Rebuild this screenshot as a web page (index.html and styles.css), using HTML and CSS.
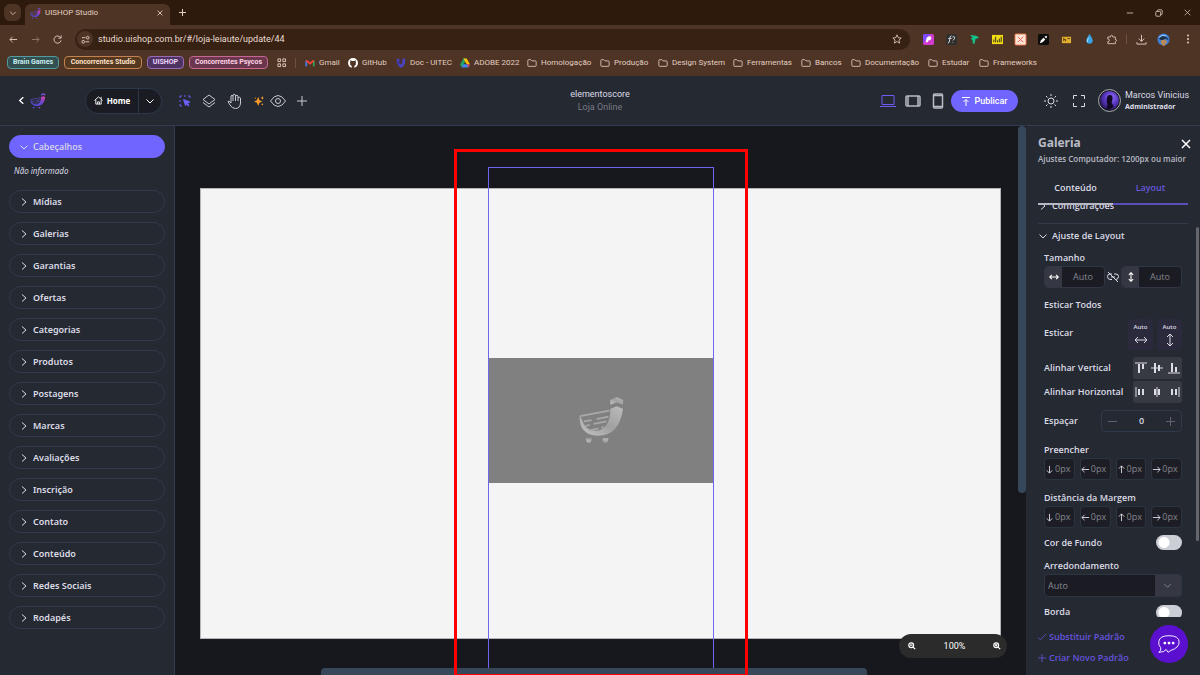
FILE: index.html
```
<!DOCTYPE html>
<html lang="pt-BR">
<head>
<meta charset="utf-8">
<title>UISHOP Studio</title>
<link rel="stylesheet" href="styles.css">
</head>
<body>
<svg class="defs" aria-hidden="true">
  <defs>
    <linearGradient id="birdGrad" x1="0" y1="1" x2="1" y2="0"><stop offset="0" stop-color="#4a4be0"/><stop offset=".55" stop-color="#6a48d0"/><stop offset="1" stop-color="#e8409a"/></linearGradient>
    <linearGradient id="greyGrad" x1="0" y1="1" x2="1" y2="0"><stop offset="0" stop-color="#c4c4c4"/><stop offset=".5" stop-color="#a0a0a0"/><stop offset="1" stop-color="#bcbcbc"/></linearGradient>
    <radialGradient id="face" cx=".6" cy=".35" r=".8"><stop offset="0" stop-color="#8d6cff"/><stop offset=".5" stop-color="#5533b8"/><stop offset="1" stop-color="#140b30"/></radialGradient>
  </defs>
  <symbol id="bird" viewBox="0 0 48 48">
    <path d="M1.500 19Q1 39 20 39.500 42 40 46 12L39.500 9.500 33 12Q33 30 22 34 8 37 3.500 22Z" stroke="none"/>
    <path d="M33 8V3L39.500 0 46 3V8L39.500 5.500Z" stroke="none"/>
    <path d="M2 19.500 32 14M6 25 14 23.500M19 22.500 31 20M8 29.500 12 28.500M16 27.500 29 25M12 34 21 32M24 31 26 30.500" fill="none" stroke-width="1.800"/>
    <path d="M8 42H14Q14 46.500 11 46.500T8 42ZM25 42H31Q31 46.500 28 46.500T25 42Z" stroke="none"/>
  </symbol>
  <symbol id="down" viewBox="0 0 10 10"><path d="M1.500 3.500 5 7 8.500 3.500"/></symbol>
  <symbol id="right" viewBox="0 0 10 10"><path d="M3 1.500 7 5 3 8.500"/></symbol>
  <symbol id="close" viewBox="0 0 10 10"><path d="M1 1 9 9M9 1 1 9"/></symbol>
  <symbol id="plus" viewBox="0 0 10 10"><path d="M5 0V10M0 5H10"/></symbol>
  <symbol id="folder" viewBox="0 0 12 10"><path d="M1 2Q1 1 2 1H4.500L6 2.500H10Q11 2.500 11 3.500V8Q11 9 10 9H2Q1 9 1 8Z"/></symbol>
  <symbol id="arrow" viewBox="0 0 10 10"><path d="M9 5H1M4 2 1 5 4 8"/></symbol>
  <symbol id="both" viewBox="0 0 14 10"><path d="M1 5H13M4 2 1 5 4 8M10 2 13 5 10 8"/></symbol>
  <symbol id="magnify" viewBox="0 0 10 10"><circle cx="4" cy="4" r="3"/><path d="M6 6 9 9M2.500 4H5.500"/></symbol>
</svg>

<div class="browser">
  <div class="tabstrip">
    <button class="tab-search" aria-label="Pesquisar guias"><svg class="i8"><use href="#down"/></svg></button>
    <div class="tab">
      <svg class="i11 bird"><use href="#bird"/></svg>
      <span class="tab-name">UISHOP Studio</span>
      <button aria-label="Fechar guia"><svg class="i6 heavy"><use href="#close"/></svg></button>
    </div>
    <button class="new-tab" aria-label="Nova guia"><svg class="i7 heavy"><use href="#plus"/></svg></button>
    <div class="window-buttons">
      <button aria-label="Minimizar"><svg class="i8" viewBox="0 0 10 10"><path d="M1 5H9"/></svg></button>
      <button aria-label="Restaurar"><svg class="i8" viewBox="0 0 10 10"><rect x="1" y="3" width="6" height="6" rx="1"/><path d="M3 3V2Q3 1 4 1H8Q9 1 9 2V6Q9 7 8 7H7"/></svg></button>
      <button aria-label="Fechar"><svg class="i7"><use href="#close"/></svg></button>
    </div>
  </div>
  <div class="toolbar">
    <button aria-label="Voltar"><svg class="i9"><use href="#arrow"/></svg></button>
    <button class="faded" aria-label="Avançar"><svg class="i9 flip"><use href="#arrow"/></svg></button>
    <button aria-label="Recarregar"><svg class="i9" viewBox="0 0 10 10"><path d="M8.500 3A4 4 0 1 0 9 6M9 .5V3.500H6"/></svg></button>
    <label class="address">
      <span class="site"><svg class="i9" viewBox="0 0 10 10"><path d="M1 3H5M5 7.500H9"/><circle cx="7.500" cy="3" r="1.500"/><circle cx="2.500" cy="7.500" r="1.500"/></svg></span>
      <input type="text" aria-label="Endereço" value="studio.uishop.com.br/#/loja-leiaute/update/44">
      <svg class="i10" viewBox="0 0 12 12"><path d="M6 1 7.500 4.500 11 4.800 8.300 7.200 9.200 11 6 9 2.800 11 3.700 7.200 1 4.800 4.500 4.500Z"/></svg>
    </label>
    <div class="extensions">
      <svg viewBox="0 0 12 12"><rect width="12" height="12" rx="2" fill="#d33bd0" stroke="none"/><path d="M0 2Q0 0 2 0H8L0 10Z" fill="#7a4bff" stroke="none"/><path d="M3 9 4 4Q8 1 9 4 9 7 6 7L5 9Z" fill="#fff" stroke="none"/></svg>
      <svg viewBox="0 0 12 12"><rect width="12" height="12" rx="2" fill="#30302f" stroke="none"/><path d="M2 10Q4 10 4 6T6 2M2.500 5H6M7 3.500Q9 2 9.500 3.500T7.500 7M7.300 9V9.500" stroke="#e8e8e8"/></svg>
      <svg viewBox="0 0 12 12"><path d="M1 1 8 2 11 4 7 5.500 6 11 4 10V7L2 5 4 4Z" fill="#12c48b" stroke="none"/></svg>
      <svg viewBox="0 0 12 12"><rect y="1" width="12" height="10" fill="#f3dd12" stroke="none"/><path d="M2 9V6M4 9V3M6 9V7M8 9V5M10 9V3" stroke="#222"/></svg>
      <svg viewBox="0 0 12 12"><rect width="12" height="12" rx="1" fill="#fbe6d5" stroke="#f2744f"/><path d="M3 3 6 6 3 9M9 3 6 6 9 9" stroke="#ef4c4c"/></svg>
      <svg viewBox="0 0 12 12"><rect width="12" height="12" rx="2" fill="#0c0c0c" stroke="none"/><path d="M2 10 3 7 6 4 8 6 5 9ZM7 3 9 2 10 3 9 5Z" fill="#fff" stroke="none"/></svg>
      <svg viewBox="0 0 12 12"><rect x="1" y="3" width="10" height="7" fill="#e0b02e" stroke="none"/><path d="M3 8V4M3 6H5V8M7 5H10" stroke="#5c3c0c"/></svg>
      <svg viewBox="0 0 12 12"><path d="M6 0Q10 6 9.500 8A3.600 3.600 0 0 1 2.500 8Q2 6 6 0Z" fill="#37a4e6" stroke="none"/><path d="M5 4Q3 7 4 9" stroke="#b4e4ff"/></svg>
      <svg class="beige" viewBox="0 0 12 12"><path d="M1 3H4Q4 1 5.500 1T7 3H10V6Q11.500 6 11.500 7T10 8.500V11H1V8.500Q3 8.500 3 7T1 5.500Z"/></svg>
    </div>
    <span class="rule"></span>
    <button class="downloads" aria-label="Downloads"><svg class="i11" viewBox="0 0 12 12"><path d="M6 1V8M3 5 6 8 9 5M1 9V11H11V9"/></svg></button>
    <button aria-label="Perfil"><svg class="i13" viewBox="0 0 14 14"><circle cx="7" cy="7" r="6.500" fill="#3c7fdc" stroke="none"/><path d="M2 6Q6 1 11 5L13 8 9 6 6 9Z" fill="#1d3149" stroke="none"/><path d="M4 8 8 7 11 9 8 14Q4 13 4 8Z" fill="#b98a55" stroke="none"/><path d="M2 5Q5 1 10 3" stroke="#a8d2ff"/></svg></button>
    <button aria-label="Menu"><svg class="i10 dots" viewBox="0 0 10 10"><circle cx="5" cy="1.500" r="1"/><circle cx="5" cy="5" r="1"/><circle cx="5" cy="8.500" r="1"/></svg></button>
  </div>
  <div class="bookmarks">
    <div class="groups">
      <button class="group teal">Brain Games</button>
      <button class="group orange">Concorrentes Studio</button>
      <button class="group violet">UISHOP</button>
      <button class="group pink">Concorrentes Psycos</button>
    </div>
    <svg class="i9" viewBox="0 0 10 10"><path d="M1 1H4V4H1ZM6.500 1H9.500V4H6.500ZM1 6.500H4V9.500H1ZM6.500 6.500H9.500V9.500H6.500Z"/></svg>
    <span class="rule"></span>
    <nav class="links">
      <a href="#"><svg viewBox="0 0 12 10"><path d="M1.500 9V2" stroke="#4285f4" stroke-width="2"/><path d="M10.500 9V2" stroke="#34a853" stroke-width="2"/><path d="M1.500 2 6 5.500 10.500 2" stroke="#ea4335" stroke-width="2.400"/></svg>Gmail</a>
      <a href="#"><svg viewBox="0 0 12 12"><circle cx="6" cy="6" r="6" fill="#fff" stroke="none"/><path d="M4.500 12V9.500Q2 8.500 2.500 5.500L3 2.500 4.500 3.500H7.500L9 2.500 9.500 5.500Q10 8.500 7.500 9.500V12Z" fill="#4e3425" stroke="none"/></svg>GitHub</a>
      <a href="#"><svg viewBox="0 0 12 12"><path d="M1 1H4V6L7 8 8 1H11Q12 9 6 12 0 9 1 1Z" fill="#4b43c8" stroke="none"/><path d="M5 1V5M2 3 4 8" stroke="#2d2680"/></svg>Doc - UITEC</a>
      <a href="#"><svg viewBox="0 0 12 11"><path d="M4 0H8L6 4 2.500 11 0 7.500Z" fill="#1fa463" stroke="none"/><path d="M4 0H8L12 7H8Z" fill="#fbbc04" stroke="none"/><path d="M2 11 4 7H12L10 11Z" fill="#4285f4" stroke="none"/><path d="M8.500 7H12L10 11Z" fill="#ea4335" stroke="none"/></svg>ADOBE 2022</a>
      <a href="#"><svg><use href="#folder"/></svg>Homologação</a>
      <a href="#"><svg><use href="#folder"/></svg>Produção</a>
      <a href="#"><svg><use href="#folder"/></svg>Design System</a>
      <a href="#"><svg><use href="#folder"/></svg>Ferramentas</a>
      <a href="#"><svg><use href="#folder"/></svg>Bancos</a>
      <a href="#"><svg><use href="#folder"/></svg>Documentação</a>
      <a href="#"><svg><use href="#folder"/></svg>Estudar</a>
      <a href="#"><svg><use href="#folder"/></svg>Frameworks</a>
    </nav>
  </div>
</div>

<header class="header">
  <div class="header-left">
    <button class="back" aria-label="Voltar"><svg class="i9 flip heavy"><use href="#right"/></svg></button>
    <svg class="i16 bird"><use href="#bird"/></svg>
    <div class="home">
      <button class="home-main"><svg class="i9" viewBox="0 0 10 10"><path d="M.5 5 5 1 9.500 5M2 4V9H8V4M4 9V6.500H6V9M8 1V3"/></svg>Home</button>
      <button class="home-more" aria-label="Mais páginas"><svg class="i10"><use href="#down"/></svg></button>
    </div>
    <div class="tools">
      <button aria-label="Selecionar"><svg class="i12 accent" viewBox="0 0 12 12"><path d="M1 3V1H3M5 1H7M9 1H11V3M1 5V7M1 9V11H3" /><path d="M4.500 4.500 11 7 8.500 8 10 10.500 9 11 7.500 9 6.500 10.500Z" fill="#7065f8"/></svg></button>
      <button aria-label="Camadas"><svg class="i14" viewBox="0 0 14 14"><path d="M7 1 13 5.500 7 10 1 5.500ZM1 8.500 7 13 13 8.500"/></svg></button>
      <button aria-label="Mover"><svg class="i16" viewBox="0 0 16 16"><path d="M4 10V3Q5 1.500 6 3V8M6 3V2Q7 .5 8.500 2V8M8.500 3Q10 1.500 11 3V8M11 5Q13 3.500 13.500 5V10Q13 15.500 8.500 15.500 5 15.500 3 12L1 8.500Q2 7 4 10"/></svg></button>
      <button aria-label="Inteligência artificial"><svg class="i10 spark" viewBox="0 0 12 12"><path d="M5 1 6.500 5 10 6.500 6.500 8 5 12 3.500 8 0 6.500 3.500 5ZM10 0 10.700 1.700 12 2.300 10.700 3 10 4.500 9.300 3 8 2.300 9.300 1.700Z"/><circle cx="10" cy="10" r="1"/><circle cx="1.500" cy="2.500" r=".8"/></svg></button>
      <button aria-label="Visualizar"><svg class="i16" viewBox="0 0 16 16"><path d="M.5 8Q4 2.500 8 2.500T15.500 8Q12 13.500 8 13.500T.5 8Z"/><circle cx="8" cy="8" r="2.500"/></svg></button>
      <button aria-label="Adicionar"><svg class="i10"><use href="#plus"/></svg></button>
    </div>
  </div>
  <div class="page-title"><span>elementoscore</span><small>Loja Online</small></div>
  <div class="header-right">
    <div class="devices">
      <button aria-label="Computador"><svg class="i16 accent" viewBox="0 0 16 16"><path d="M2 2.500H14V11.500H2ZM0 13.500H16"/></svg></button>
      <button aria-label="Tablet"><svg class="i16 thick" viewBox="0 0 16 16"><rect x="1" y="3" width="14" height="10" rx="1"/><path d="M3 3V13M13 3V13"/></svg></button>
      <button aria-label="Celular"><svg class="i16 thick" viewBox="0 0 16 16"><rect x="3.500" y="1" width="9" height="14" rx="1"/><path d="M4 2.500H12M4 13.500H12"/></svg></button>
    </div>
    <button class="publish"><svg class="i10" viewBox="0 0 10 10"><path d="M1 1.500H9M5 10V3.500M2.500 6 5 3.500 7.500 6"/></svg>Publicar</button>
    <button class="sun" aria-label="Tema"><svg class="i14" viewBox="0 0 14 14"><circle cx="7" cy="7" r="3"/><path d="M7 0V2M7 12V14M0 7H2M12 7H14M2 2 3.500 3.500M10.500 10.500 12 12M12 2 10.500 3.500M3.500 10.500 2 12"/></svg></button>
    <button class="full" aria-label="Tela cheia"><svg class="i12" viewBox="0 0 12 12"><path d="M.5 4V.5H4M8 .5H11.500V4M11.500 8V11.500H8M4 11.500H.5V8"/></svg></button>
    <svg class="avatar" viewBox="0 0 22 22"><circle cx="11" cy="11" r="10.500" fill="#17181d" stroke="#c9c9d3" stroke-width=".8"/><circle cx="11" cy="11" r="9" fill="url(#face)" stroke="none"/><path d="M8 20 9 15Q7 9 10 6 14 5 14 9L13 13 15 17Q12 20 8 20Z" fill="#110923" stroke="none"/></svg>
    <div class="user"><span>Marcos Vinicius</span><b>Administrador</b></div>
  </div>
</header>

<main class="studio">
  <aside class="sidebar">
    <button class="category open"><svg class="i10"><use href="#down"/></svg>Cabeçalhos</button>
    <em class="empty">Não informado</em>
    <button class="category"><svg class="i10"><use href="#right"/></svg>Mídias</button>
    <button class="category"><svg class="i10"><use href="#right"/></svg>Galerias</button>
    <button class="category"><svg class="i10"><use href="#right"/></svg>Garantias</button>
    <button class="category"><svg class="i10"><use href="#right"/></svg>Ofertas</button>
    <button class="category"><svg class="i10"><use href="#right"/></svg>Categorias</button>
    <button class="category"><svg class="i10"><use href="#right"/></svg>Produtos</button>
    <button class="category"><svg class="i10"><use href="#right"/></svg>Postagens</button>
    <button class="category"><svg class="i10"><use href="#right"/></svg>Marcas</button>
    <button class="category"><svg class="i10"><use href="#right"/></svg>Avaliações</button>
    <button class="category"><svg class="i10"><use href="#right"/></svg>Inscrição</button>
    <button class="category"><svg class="i10"><use href="#right"/></svg>Contato</button>
    <button class="category"><svg class="i10"><use href="#right"/></svg>Conteúdo</button>
    <button class="category"><svg class="i10"><use href="#right"/></svg>Redes Sociais</button>
    <button class="category"><svg class="i10"><use href="#right"/></svg>Rodapés</button>
  </aside>

  <section class="canvas" aria-label="Área de edição">
    <div class="artboard"></div>
    <div class="picture"><svg class="placeholder"><use href="#bird"/></svg></div>
    <div class="bar-bottom"></div>
    <div class="selection"></div>
    <div class="bar-side"></div>
    <div class="highlight"></div>
    <div class="zoom">
      <button aria-label="Diminuir"><svg class="i8 heavy"><use href="#magnify"/></svg></button>
      <span>100%</span>
      <button aria-label="Aumentar"><svg class="i8 heavy" viewBox="0 0 10 10"><use href="#magnify" width="10" height="10"/><path d="M4 2.500V5.500"/></svg></button>
    </div>
  </section>

  <aside class="panel">
    <div class="panel-head">
      <div><h2>Galeria</h2><p>Ajustes Computador: 1200px ou maior</p></div>
      <button aria-label="Fechar painel"><svg class="i10 heavy"><use href="#close"/></svg></button>
    </div>
    <div class="tabs"><button>Conteúdo</button><button class="active">Layout</button></div>
    <div class="scroll">
      <button class="section clipped"><svg class="i10"><use href="#right"/></svg>Configurações</button>
      <button class="section"><svg class="i10"><use href="#down"/></svg>Ajuste de Layout</button>
      <div class="fields">
        <label class="caption" for="width">Tamanho</label>
        <div class="size">
          <div class="sized"><span><svg class="i10 heavy"><use href="#both"/></svg></span><input id="width" type="text" placeholder="Auto"></div>
          <button aria-label="Desvincular"><svg class="i12" viewBox="0 0 12 12"><path d="M1 1 11 11M5 3H3Q.5 3 .5 5.500T3 8.500H5M7 3H9Q11.500 3 11.500 5.500T9 8.500M4 6H8"/></svg></button>
          <div class="sized"><span><svg class="i10 heavy turn"><use href="#both"/></svg></span><input type="text" aria-label="Altura" placeholder="Auto"></div>
        </div>
        <div class="stretch-all">Esticar Todos</div>
        <div class="row stretch"><span>Esticar</span>
          <div class="stretch-buttons"><button>Auto<svg class="i14"><use href="#both"/></svg></button><button>Auto<svg class="i14 turn"><use href="#both"/></svg></button></div>
        </div>
        <div class="row"><span>Alinhar Vertical</span>
          <div class="align">
            <button aria-label="Topo"><svg class="i12" viewBox="0 0 12 12"><path d="M0 1H12"/><path class="w" d="M4 2V11M8 2V7"/></svg></button>
            <button aria-label="Meio"><svg class="i12" viewBox="0 0 12 12"><path d="M0 6H12"/><path class="w" d="M4 1V11M8 3V9"/></svg></button>
            <button aria-label="Base"><svg class="i12" viewBox="0 0 12 12"><path d="M0 11H12"/><path class="w" d="M4 1V10M8 5V10"/></svg></button>
          </div>
        </div>
        <div class="row"><span>Alinhar Horizontal</span>
          <div class="align">
            <button aria-label="Esquerda"><svg class="i12" viewBox="0 0 12 12"><path d="M1 1V11"/><path class="w" d="M4 3V9M8 3V9"/></svg></button>
            <button aria-label="Centro"><svg class="i12" viewBox="0 0 12 12"><path d="M6 1V11"/><path class="w" d="M4 3V9M8 3V9"/></svg></button>
            <button aria-label="Direita"><svg class="i12" viewBox="0 0 12 12"><path d="M11 1V11"/><path class="w" d="M4 3V9M8 3V9"/></svg></button>
          </div>
        </div>
        <div class="row gap-row"><label for="gap">Espaçar</label>
          <div class="stepper"><button aria-label="Menos"><svg class="i9" viewBox="0 0 10 10"><path d="M0 5H10"/></svg></button><input id="gap" type="text" value="0"><button aria-label="Mais"><svg class="i9"><use href="#plus"/></svg></button></div>
        </div>
        <span class="caption spaced">Preencher</span>
        <div class="sides">
          <label><svg class="i9 ccw"><use href="#arrow"/></svg><input type="text" aria-label="Preencher abaixo" placeholder="0px"></label>
          <label><svg class="i9"><use href="#arrow"/></svg><input type="text" aria-label="Preencher à esquerda" placeholder="0px"></label>
          <label><svg class="i9 turn"><use href="#arrow"/></svg><input type="text" aria-label="Preencher acima" placeholder="0px"></label>
          <label><svg class="i9 flip"><use href="#arrow"/></svg><input type="text" aria-label="Preencher à direita" placeholder="0px"></label>
        </div>
        <span class="caption spaced">Distância da Margem</span>
        <div class="sides">
          <label><svg class="i9 ccw"><use href="#arrow"/></svg><input type="text" aria-label="Margem abaixo" placeholder="0px"></label>
          <label><svg class="i9"><use href="#arrow"/></svg><input type="text" aria-label="Margem à esquerda" placeholder="0px"></label>
          <label><svg class="i9 turn"><use href="#arrow"/></svg><input type="text" aria-label="Margem acima" placeholder="0px"></label>
          <label><svg class="i9 flip"><use href="#arrow"/></svg><input type="text" aria-label="Margem à direita" placeholder="0px"></label>
        </div>
        <div class="row switch-row"><label for="bg">Cor de Fundo</label><input class="switch" id="bg" type="checkbox"></div>
        <label class="caption" for="round">Arredondamento</label>
        <div class="select"><select id="round"><option>Auto</option></select><svg class="i9"><use href="#down"/></svg></div>
        <div class="row switch-row last"><label for="border">Borda</label><input class="switch" id="border" type="checkbox"></div>
      </div>
    </div>
    <div class="panel-foot">
      <button><svg class="i8" viewBox="0 0 10 10"><path d="M0 5.500 3 8.500 10 1.500"/></svg>Substituir Padrão</button>
      <button><svg class="i8"><use href="#plus"/></svg>Criar Novo Padrão</button>
    </div>
    <div class="panel-bar"></div>
    <button class="chat" aria-label="Conversar"><svg viewBox="0 0 26 22"><path d="M4 15Q1 12 2 8 3 2 13 2 24 2 24 9 24 15 15 18L12 20 10 17Q8 20 2 20 5 18 4 15Z"/><circle cx="8.500" cy="10" r="1.500"/><circle cx="13" cy="10" r="1.500"/><circle cx="17.500" cy="10" r="1.500"/></svg></button>
  </aside>
</main>
</body>
</html>
```
FILE: styles.css
```
* { box-sizing: border-box; }
body {
  margin: 0;
  height: 100vh;
  overflow: hidden;
  display: flex;
  flex-direction: column;
  background: #17181d;
  color: #dcdce6;
  font: 9px/12px "Open Sans", "Noto Sans", sans-serif;
}
button, input, select {
  margin: 0;
  padding: 0;
  border: 0;
  background: none;
  color: inherit;
  font: inherit;
  min-width: 0;
}
button { display: flex; align-items: center; justify-content: center; flex: none; }
svg { flex: none; fill: none; stroke: currentColor; stroke-width: 1; overflow: visible; }
.defs { position: absolute; width: 0; height: 0; }
.i6 { width: 6px; height: 6px; }
.i7 { width: 7px; height: 7px; }
.i8 { width: 8px; height: 8px; }
.i9 { width: 9px; height: 9px; }
.i10 { width: 10px; height: 10px; }
.i11 { width: 11px; height: 11px; }
.i12 { width: 12px; height: 12px; }
.i13 { width: 13px; height: 13px; }
.i14 { width: 14px; height: 14px; }
.i16 { width: 16px; height: 16px; }
.heavy { stroke-width: 1.5; }
.bird { fill: url(#birdGrad); stroke: #6450dc; }
.accent { color: #6a5cf5; }
.flip { transform: rotate(180deg); }
.turn { transform: rotate(90deg); }
.ccw { transform: rotate(-90deg); }
.rule { width: 1px; height: 10px; background: #6d5040; }

/* Browser window */
.browser { flex: none; color: #e3cfc2; background: #4e3425; font-family: "Noto Sans", "Open Sans", sans-serif; }
.tabstrip { display: flex; height: 25px; padding: 4px 9px 0 4px; background: #2d1a0d; }
.tab-search { width: 17px; height: 17px; border-radius: 6px; background: #4e3425; }
.tab { display: flex; align-items: center; gap: 4px; width: 145px; margin-left: 4px; padding: 0 7px 3px 5px; border-radius: 6px 6px 0 0; background: #4e3425; }
.tab-name { flex: 1; font: 8px/12px Roboto, sans-serif; }
.new-tab { width: 25px; height: 17px; }
.window-buttons { display: flex; gap: 21px; height: 17px; margin-left: auto; }
.toolbar { display: flex; align-items: center; height: 28px; gap: 13px; padding: 0 7px 0 9px; }
.faded { opacity: .45; }
.address { display: flex; flex: 1; align-items: center; height: 21px; gap: 5px; padding: 0 8px 0 2px; border-radius: 11px; background: #362113; }
.address input { flex: 1; font: 9px/12px Roboto, sans-serif; color: #eadcd2; }
.site { display: grid; place-items: center; width: 16px; height: 16px; border-radius: 8px; background: #4e3425; }
.extensions { display: flex; gap: 12px; }
.extensions svg { width: 11px; height: 11px; }
.extensions .beige { width: 10px; }
.dots { fill: currentColor; stroke: none; }
.toolbar .rule { margin: 0 -4px; }
.downloads { margin-right: -3px; }
.bookmarks { display: flex; align-items: center; height: 23px; gap: 9px; padding: 0 8px 4px 7px; font-size: 8px; }
.groups { display: flex; gap: 5px; }
.group { height: 13px; border: 1px solid; border-radius: 4px; font: 700 8px/11px Roboto, sans-serif; font-size: 7px; white-space: nowrap; }
.teal { width: 52px; border-color: #529ba0; background: #334f50; color: #c5f0f0; }
.orange { width: 78px; border-color: #c48150; background: #54381f; color: #ffe0c8; }
.violet { width: 37px; border-color: #9a6bb4; background: #4e3462; color: #eed6ff; }
.pink { width: 79px; border-color: #c76694; background: #6a374d; color: #ffd3e8; }
.links { display: grid; grid-template-columns: 43px 48px 64px 67px 73px 58px 75px 68px 50px 77px 51px auto; font: 8px/12px Roboto, sans-serif; }
.links a { display: flex; align-items: center; gap: 4px; color: inherit; text-decoration: none; white-space: nowrap; }
.links svg { width: 10px; height: 10px; }

/* Studio header */
.header { display: grid; grid-template-columns: 1fr auto 1fr; align-items: center; flex: none; height: 50px; background: #252932; border-bottom: 1px solid #313b51; }
.header-left, .header-right, .tools, .devices { display: flex; align-items: center; }
.header-left { padding-left: 17px; }
.back { margin-right: 4px; color: #fff; }
.home { display: flex; width: 77px; height: 26px; margin: 0 17px 0 39px; border: 1px solid #2c3848; border-radius: 13px; background: #1b1c23; color: #fff; }
.home-main { flex: 1; gap: 4px; font-weight: 700; font-size: 8px; }
.home-more { width: 23px; border-left: 1px solid #2c3848; }
.tools { gap: 11px; color: #c9cad3; }
.spark { fill: #ff9c28; stroke: none; }
.tools button:nth-child(5) { margin-left: -5px; }
.page-title { display: flex; flex-direction: column; align-items: center; font: 9px/13px Roboto, sans-serif; }
.page-title small { font-size: 9px; color: #777985; }
.header-right { justify-content: flex-end; padding-right: 14px; color: #dcdce6; }
.devices { gap: 9px; margin-right: 5px; }
.thick { stroke-width: 1.5; color: #b9bac2; }
.publish { width: 67px; height: 22px; gap: 3px; margin-right: 26px; border-radius: 11px; background: #7065ff; color: #fff; font: 500 9px/12px Roboto, sans-serif; }
.full { margin: 0 13px 0 15px; }
.avatar { width: 23px; height: 23px; margin-right: 4px; }
.user { display: flex; flex-direction: column; width: 61px; white-space: nowrap; font: 9px/12px Roboto, sans-serif; }
.user b { font: 700 7px/12px "Noto Sans", sans-serif; }

/* Body */
.studio { display: flex; flex: 1; min-height: 0; }
.sidebar { display: flex; flex-direction: column; gap: 9px; width: 175px; padding: 9px; border-right: 1px solid #313b51; background: #252932; font-family: "Noto Sans", sans-serif; }
.category { justify-content: flex-start; width: 100%; height: 23px; gap: 4px; padding-left: 9px; border: 1px solid #35384a; border-radius: 12px; font-weight: 600; }
.category.open { margin-bottom: -4px; border-color: #7065ff; background: #7065ff; font-weight: 500; }
.empty { height: 17px; margin-bottom: 1px; padding-left: 5px; font-size: 8px; line-height: 15px; }

.canvas { position: relative; flex: 1; overflow: hidden; background: #17181d; }
.canvas > * { position: absolute; }
.artboard { left: 25px; top: 62px; width: 801px; height: 451px; border: 1px solid #b5b5b8; background: #f4f4f4; }
.picture { display: grid; place-items: center; left: 314px; top: 232px; width: 224px; height: 125px; background: #808080; }
.placeholder { width: 47px; height: 47px; fill: url(#greyGrad); stroke: #a8a8a8; }
.selection { left: 313px; top: 41px; bottom: 7px; width: 226px; border: 1px solid #7065f0; border-bottom: 0; }
.highlight { left: 279px; top: 23px; bottom: 0; width: 294px; border: 3px solid #f00; border-bottom-width: 1px; }
.bar-bottom { left: 146px; bottom: 0; width: 546px; height: 7px; border-radius: 4px 4px 0 0; background: #36475a; }
.bar-side { right: 0; top: 0; width: 8px; height: 367px; border-radius: 4px; background: #36475a; }
.zoom { display: flex; align-items: center; justify-content: space-between; right: 19px; bottom: 17px; width: 108px; height: 24px; padding: 0 6px 0 9px; border-radius: 12px; background: #2b2b2b; color: #fff; font: 9px/12px Roboto, sans-serif; }

.panel { position: relative; display: flex; flex-direction: column; width: 174px; background: #252932; font-weight: 600; }
.panel-head { display: flex; justify-content: space-between; height: 50px; padding: 9px 9px 0 12px; color: #b9bac4; }
.panel-head > div { width: 142px; }
.panel-head h2 { margin: 0; font: 700 12px/15px "Noto Sans", sans-serif; }
.panel-head p { margin: 3px 0 0; font-size: 8px; line-height: 12px; white-space: nowrap; }
.panel-head button { align-self: flex-start; margin-top: 4px; color: #fff; }
.tabs { display: flex; flex: none; height: 29px; margin: 0 12px; }
.tabs button { flex: 1; padding-bottom: 3px; border-bottom: 2px solid #b7b7c4; }
.tabs .active { color: #6857df; border-color: #5a4ebb; }
.scroll { flex: 1; min-height: 0; overflow: hidden; padding: 0 12px; }
.section { justify-content: flex-start; width: 100%; height: 23px; gap: 4px; }
.section.clipped { height: 36px; margin-top: -17px; border-bottom: 1px solid #35394a; }
.fields { padding: 3px 6px 0; }
.caption { display: block; height: 16px; line-height: 16px; }
.caption.spaced { margin-top: 10px; }
.size { display: flex; justify-content: space-between; height: 22px; }
.sized { display: flex; width: 61px; border: 1px solid #303644; border-radius: 4px; background: #1b1c23; overflow: hidden; }
.sized span { display: grid; place-items: center; width: 17px; background: #353743; color: #fff; }
.sized input { flex: 1; width: 0; text-align: center; font-weight: 400; }
input::placeholder { color: #85868e; opacity: 1; }
.stretch-all { height: 31px; line-height: 33px; }
.row { display: flex; align-items: center; justify-content: space-between; height: 22px; margin-bottom: 2px; white-space: nowrap; }
.stretch { height: 31px; margin-bottom: 7px; }
.stretch > span { padding-bottom: 3px; }
.stretch-buttons { display: flex; gap: 4px; }
.stretch-buttons button { flex-direction: column; width: 25px; height: 31px; gap: 1px; border-radius: 4px; background: #2a2a3c; font-size: 6px; line-height: 9px; }
.align { display: flex; align-items: center; justify-content: space-around; width: 49px; height: 22px; border-radius: 3px; background: #383a43; }
.w { stroke-width: 2; }
.gap-row { margin: 7px 0 0; }
.stepper { display: flex; justify-content: space-between; width: 81px; height: 22px; padding: 0 6px; border: 1px solid #2e3a49; border-radius: 4px; }
.stepper button { color: #666975; }
.stepper input { width: 30px; text-align: center; }
.sides { display: grid; grid-template-columns: repeat(4, 1fr); gap: 5px; height: 22px; }
.sides label { display: flex; align-items: center; gap: 1px; border: 1px solid #2b3540; border-radius: 4px; background: #1d1e25; }
.sides input { flex: 1; width: 0; font-weight: 400; }
.switch-row { height: 29px; margin: 0 0 1px; }
.switch-row.last { height: 30px; }
.switch { width: 26px; height: 15px; appearance: none; border-radius: 8px; background: radial-gradient(circle at 8px 50%, #fff 5px, #cbced5 6px); }
.select { display: flex; align-items: center; height: 23px; padding-right: 9px; border: 1px solid #2e3644; border-radius: 4px; background: linear-gradient(to left, #353743 26px, #1b1c23 26px); color: #898a93; }
.select select { flex: 1; padding-left: 3px; appearance: none; font-weight: 400; }
.panel-foot { flex: none; height: 58px; padding: 9px 12px 0; color: #6654de; }
.panel-foot button { height: 21px; gap: 3px; }
.panel-bar { position: absolute; right: 1px; top: 101px; width: 3px; height: 314px; border-radius: 2px; background: #66676c; }
.chat { position: absolute; right: 12px; bottom: 12px; width: 38px; height: 38px; border-radius: 19px; background: #5b10cf; color: #fff; }
.chat svg { width: 24px; height: 22px; }
.chat circle { fill: #fff; stroke: none; }
```
